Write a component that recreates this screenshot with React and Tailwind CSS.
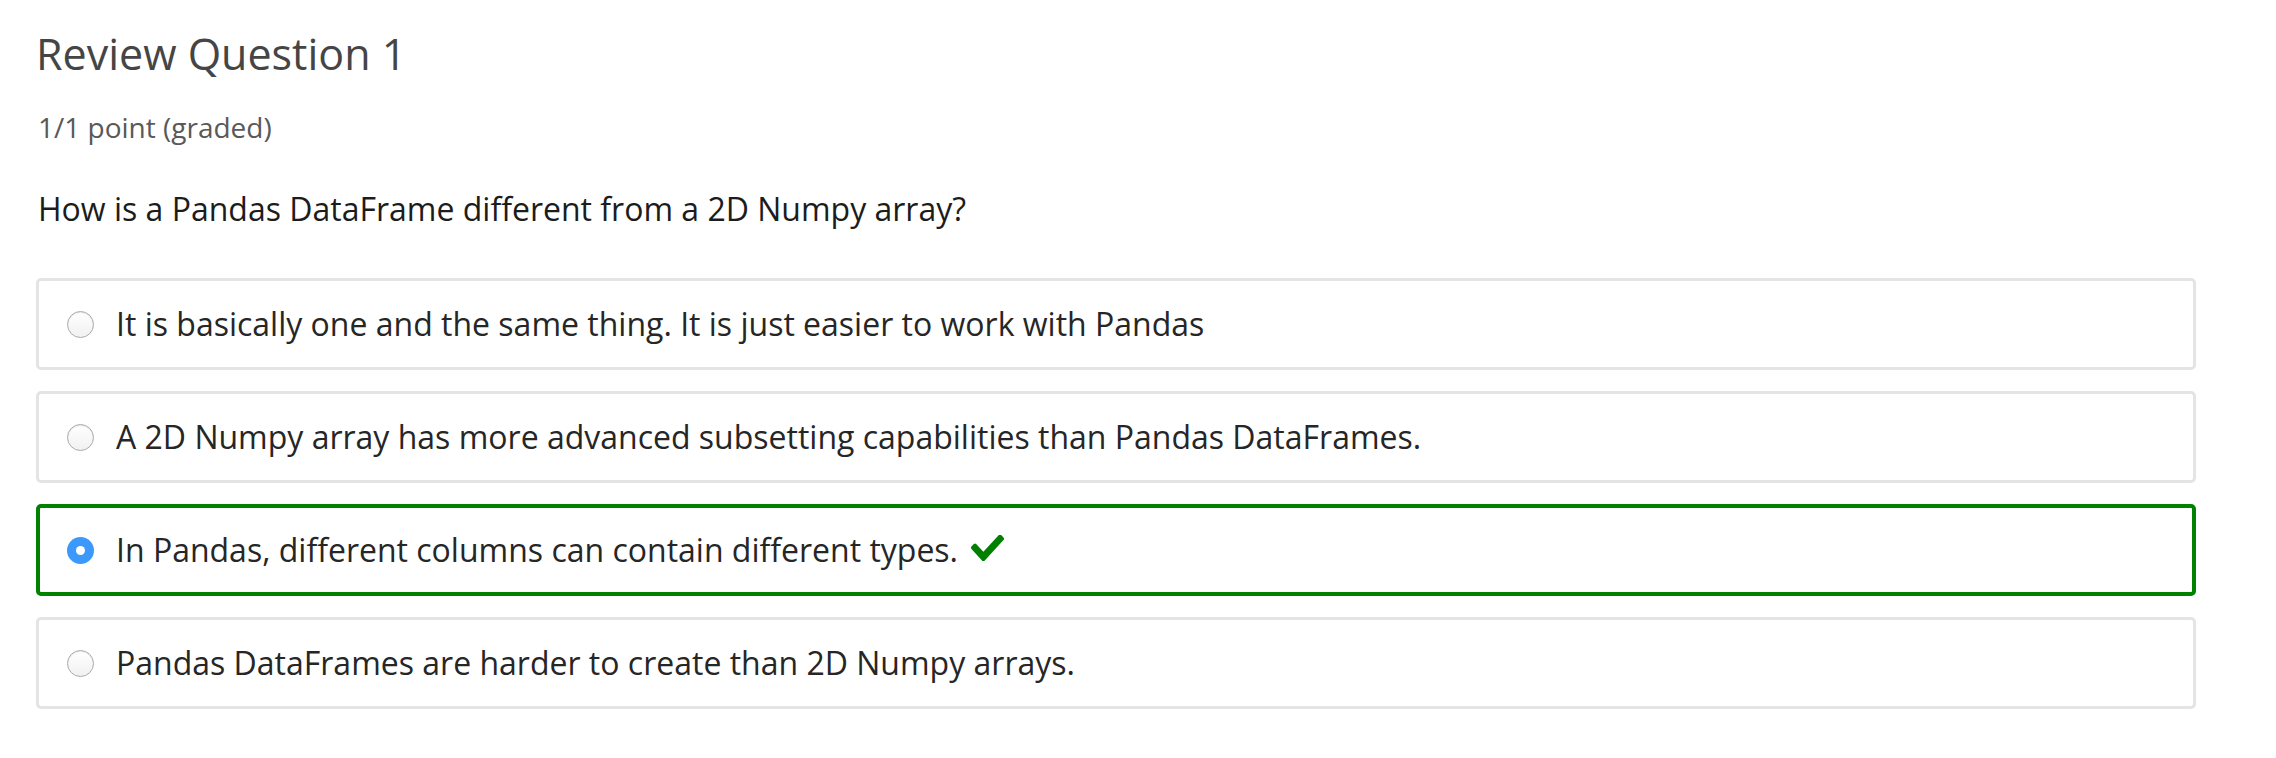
import React from "react";

const options = [
    { text: "It is basically one and the same thing. It is just easier to work with Pandas", checked: false },
    { text: "A 2D Numpy array has more advanced subsetting capabilities than Pandas DataFrames.", checked: false },
    { text: "In Pandas, different columns can contain different types.", checked: true },
    { text: "Pandas DataFrames are harder to create than 2D Numpy arrays.", checked: false },
];

function CheckIcon() {
    return (
        <svg viewBox="0 72 512 372" preserveAspectRatio="none" className="w-[33px] h-[26px] ml-[13px] mb-[4px] shrink-0" fill="#008000">
            <path d="M173.898 439.404l-166.4-166.4c-9.997-9.997-9.997-26.206 0-36.204l36.203-36.204c9.997-9.998 26.207-9.998 36.204 0L192 312.69 432.095 72.596c9.997-9.997 26.207-9.997 36.204 0l36.203 36.204c9.997 9.997 9.997 26.206 0 36.204l-294.4 294.401c-9.998 9.997-26.207 9.997-36.204-.001z" />
        </svg>
    );
}

function Radio({ checked }) {
    if (checked) {
        return (
            <span className="w-[27px] h-[27px] rounded-full bg-[#3b99fc] flex items-center justify-center shrink-0">
                <span className="w-[9px] h-[9px] rounded-full bg-white" />
            </span>
        );
    }
    return (
        <span className="w-[27px] h-[27px] rounded-full border border-[#aaaaaa] bg-gradient-to-b from-white to-[#f1f1f1] shadow-[inset_0_1px_1px_rgba(0,0,0,0.1)] shrink-0" />
    );
}

function Option({ text, checked }) {
    return (
        <label
            className={
                checked
                    ? "flex items-center h-[92px] rounded-[5px] border-[4px] border-[#008100] pl-[27px]"
                    : "flex items-center h-[92px] rounded-[5px] border-[3px] border-[#e4e4e4] pl-[28px]"
            }
        >
            <Radio checked={checked} />
            <span className="ml-[22px] text-[32px] leading-[44px] text-[#262626]">{text}</span>
            {checked && <CheckIcon />}
        </label>
    );
}

export default function App() {
    return (
        <div className="min-h-screen bg-white font-['Open_Sans',sans-serif]">
            <div className="pl-[36px] pr-[80px] pt-[29px]">
                <h3 className="text-[43px] leading-[50px] text-[#454545]">Review Question 1</h3>
                <div className="mt-[28px] text-[28px] leading-[40px] text-[#595959] pl-[2px]">1/1 point (graded)</div>
                <p className="mt-[40px] text-[32px] leading-[44px] text-[#1c1c1c] pl-[2px]">How is a Pandas DataFrame different from a 2D Numpy array?</p>
                <div className="mt-[47px] flex flex-col gap-[21px]">
                    {options.map(({ text, checked }) => {
                        return <Option text={text} checked={checked} key={text} />
                    })}
                </div>
            </div>
        </div>
    );
}
